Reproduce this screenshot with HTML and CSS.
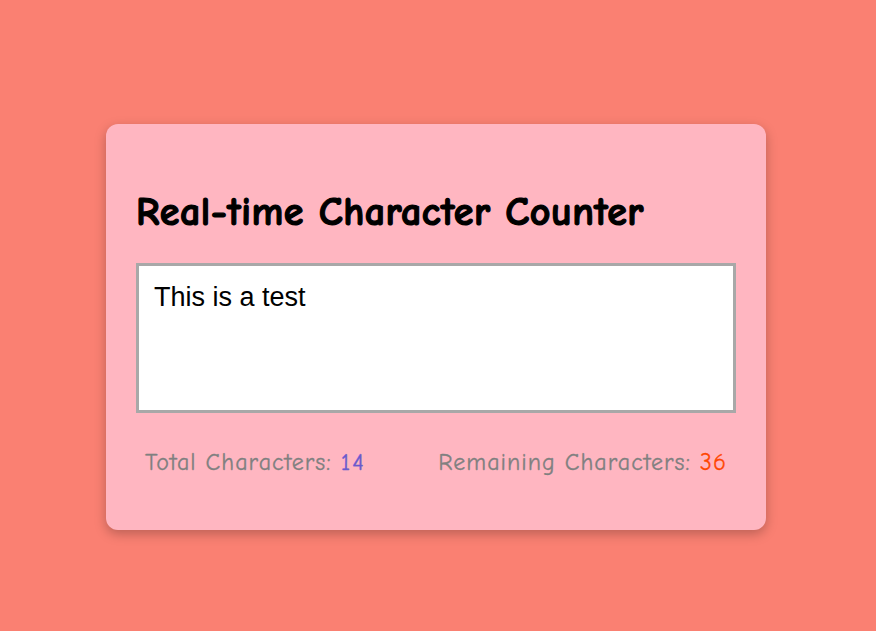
FILE: index.html
```html
<!DOCTYPE html>
<html>
<head>
<meta charset="utf-8">
<title>Real-time Character Counter</title>
<link rel="stylesheet" href="styles.css">
</head>
<body>
<div class="card">
  <h1 class="title">Real-time Character Counter</h1>
  <textarea class="input">This is a test</textarea>
  <div class="stats">
    <p class="stat">Total Characters: <span class="total">14</span></p>
    <p class="stat">Remaining Characters: <span class="remaining">36</span></p>
  </div>
</div>
</body>
</html>
```
FILE: styles.css
```css
html, body {
  margin: 0;
  padding: 0;
}
body {
  background: #fa8072;
  width: 876px;
  height: 631px;
  display: flex;
  justify-content: center;
  align-items: flex-start;
  font-family: "Comic Sans MS", "Comic Neue", "DejaVu Sans", sans-serif;
}
.card {
  box-sizing: border-box;
  margin-top: 124px;
  margin-right: 4px;
  width: 660px;
  height: 406px;
  padding: 63px 30px 30px;
  background: #ffb6c1;
  border-radius: 12px;
  box-shadow: 0 4px 12px rgba(0, 0, 0, 0.25);
  display: flex;
  flex-direction: column;
}
.title {
  margin: 0 0 26px;
  font-size: 40px;
  line-height: 50px;
  letter-spacing: 0.5px;
  font-weight: bold;
  color: #000;
  -webkit-text-stroke: 1.2px #000;
}
.input {
  box-sizing: border-box;
  flex: none;
  width: 600px;
  height: 150px;
  border: 3px solid #a8a8a8;
  padding: 16px 15px 12px;
  font-family: "Liberation Sans", Arial, sans-serif;
  font-size: 27px;
  resize: none;
  background: #fff;
  color: #000;
  outline: none;
}
.stats {
  display: flex;
  justify-content: space-between;
  padding: 0 9px;
  margin-top: 34px;
}
.stat {
  margin: 0;
  font-size: 24px;
  line-height: 30px;
  letter-spacing: 1px;
  color: #808080;
  -webkit-text-stroke: 0.3px #808080;
}
.total {
  color: #6a5acd;
  -webkit-text-stroke-color: #6a5acd;
  letter-spacing: 2px;
}
.remaining {
  color: #ff4500;
  -webkit-text-stroke-color: #ff4500;
}
```
